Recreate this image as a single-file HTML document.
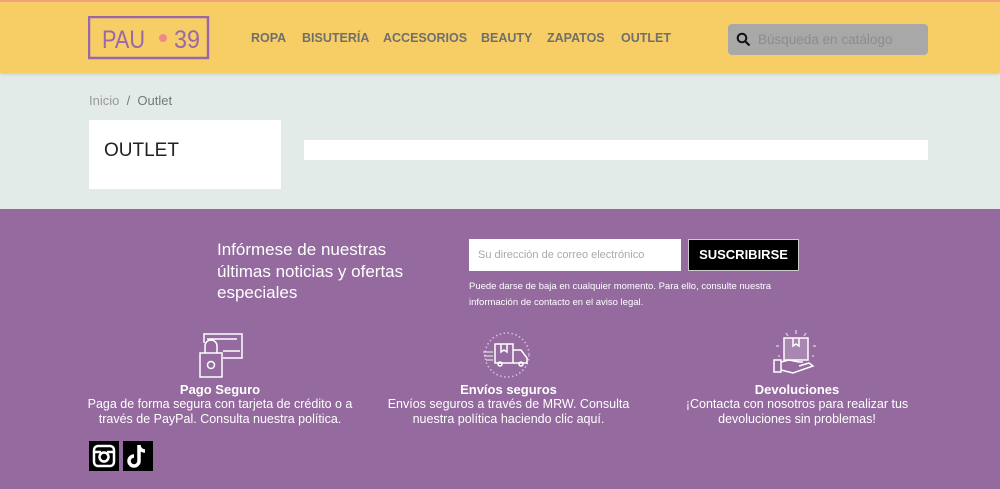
<!DOCTYPE html>
<html><head><meta charset="utf-8"><style>
*{margin:0;padding:0;box-sizing:border-box}
body{width:1000px;height:489px;overflow:hidden;font-family:"Liberation Sans",sans-serif;background:#e3ebe8;position:relative}
.hdr{position:absolute;left:0;top:0;width:1000px;height:73px;background:#f7cd66;border-top:2px solid #f0a27a;box-shadow:0 1px 3px rgba(0,0,0,.15)}
.nav{position:absolute;top:29px;font-size:12.5px;font-weight:bold;color:#6f6f6f;letter-spacing:0}
.search{position:absolute;left:728px;top:22px;width:200px;height:31px;background:#a8a8a8;border-radius:4px}
.search span{position:absolute;left:30px;top:8px;font-size:13.5px;color:#8c8c8c}
.bc{position:absolute;left:89px;top:93px;font-size:13px;color:#777}
.box{position:absolute;left:89px;top:120px;width:192px;height:69px;background:#fff}
.box h1{position:absolute;left:15px;top:20px;font-size:19px;font-weight:normal;color:#222}
.bar{position:absolute;left:304px;top:140px;width:624px;height:20px;background:#fff}
.ft{position:absolute;left:0;top:209px;width:1000px;height:280px;background:#946a9f;color:#fff}
.ft .t{position:absolute;left:217px;top:30px;font-size:17px;line-height:21.5px;width:200px}
.inp{position:absolute;left:469px;top:30px;width:212px;height:32px;background:#fff;font-size:11px;color:#aaa;padding:10px 9px}
.btn{position:absolute;left:688px;top:30px;width:111px;height:32px;background:#000;border:1px solid #ccc;font-size:13px;font-weight:bold;text-align:center;line-height:30px}
.sm{position:absolute;left:469px;top:70px;font-size:9.5px;line-height:15.5px;width:340px}
.col{position:absolute;top:173px;text-align:center;font-size:12.5px;line-height:15px}
.col b{display:block;font-size:13px}
.soc{position:absolute;top:232px;width:30px;height:30px;background:#000}
</style></head><body>
<div class="hdr">
<svg style="position:absolute;left:88px;top:14px" width="122" height="45" viewBox="0 0 122 45"><rect x="1" y="1" width="119" height="41" fill="none" stroke="#9a68a8" stroke-width="2.5"/><text x="14" y="32" font-family="Liberation Sans" font-size="25" fill="#9a68a8" textLength="43" lengthAdjust="spacingAndGlyphs">PAU</text><circle cx="75" cy="22" r="4" fill="#ee8a88"/><text x="86" y="32" font-family="Liberation Sans" font-size="25" fill="#9a68a8" textLength="26" lengthAdjust="spacingAndGlyphs">39</text></svg>
<div class="nav" style="left:251px">ROPA</div>
<div class="nav" style="left:302px">BISUTERÍA</div>
<div class="nav" style="left:383px">ACCESORIOS</div>
<div class="nav" style="left:481px">BEAUTY</div>
<div class="nav" style="left:547px">ZAPATOS</div>
<div class="nav" style="left:621px">OUTLET</div>
<div class="search"><svg style="position:absolute;left:8px;top:8px" width="15" height="15" viewBox="0 0 15 15"><circle cx="6" cy="6" r="4.3" fill="none" stroke="#111" stroke-width="2"/><path d="M9 9l4.5 4.5" stroke="#111" stroke-width="2.2"/></svg><span>Búsqueda en catálogo</span></div>
</div>
<div class="bc"><span style="color:#999">Inicio</span> &nbsp;/&nbsp; Outlet</div>
<div class="box"><h1>OUTLET</h1></div>
<div class="bar"></div>
<div class="ft">
<div class="t">Infórmese de nuestras últimas noticias y ofertas especiales</div>
<div class="inp">Su dirección de correo electrónico</div>
<div class="btn">SUSCRIBIRSE</div>
<div class="sm">Puede darse de baja en cualquier momento. Para ello, consulte nuestra información de contacto en el aviso legal.</div>
<svg style="position:absolute;left:195px;top:122px" width="50" height="50" viewBox="0 0 50 50" fill="none" stroke="#fff" stroke-width="1.5"><path d="M22 3h25v24H28M9 12V3h13"/><path d="M12 8h30M28 20h17"/><path d="M10 22v-7a6 6 0 0 1 12 0v7"/><rect x="5" y="22" width="22" height="24" fill="#946a9f"/><circle cx="16" cy="34" r="3.5"/></svg>
<svg style="position:absolute;left:481px;top:120px" width="56" height="52" viewBox="0 0 56 52" fill="none" stroke="#fff" stroke-width="1.5"><circle cx="26" cy="26" r="22" stroke-dasharray="1.5 2.5" stroke-opacity=".6"/><path d="M2 23h10M3 27h9M5 31h7" stroke-opacity=".6"/><rect x="14" y="15" width="18" height="19"/><path d="M20 15v8l3-2 3 2v-8"/><path d="M32 21h8l6 8v5H32"/><circle cx="19" cy="35" r="2"/><circle cx="40" cy="35" r="2"/></svg>
<svg style="position:absolute;left:766px;top:120px" width="60" height="52" viewBox="0 0 60 52" fill="none" stroke="#fff" stroke-width="1.5"><rect x="18" y="9" width="24" height="22" fill="rgba(255,255,255,.2)"/><path d="M27 9v8l3-2 3 2V9"/><path d="M8 31h7v12H8zM15 33l8-2 10 2h4M15 41l12 3 20-7-4-3-10 3" /><path d="M30 1v4M20 4l2 3M40 4l-2 3M10 17h3M47 17h3M12 27h2M46 27h2" stroke-opacity=".6"/></svg>
<div class="col" style="left:80px;width:280px"><b>Pago Seguro</b>Paga de forma segura con tarjeta de crédito o a través de PayPal. Consulta nuestra política.</div>
<div class="col" style="left:380px;width:257px"><b>Envíos seguros</b>Envíos seguros a través de MRW. Consulta nuestra política haciendo clic aquí.</div>
<div class="col" style="left:677px;width:240px"><b>Devoluciones</b>¡Contacta con nosotros para realizar tus devoluciones sin problemas!</div>
<div class="soc" style="left:89px"><svg width="30" height="30" viewBox="0 0 30 30" fill="none" stroke="#fff" stroke-width="2.5"><rect x="5" y="5" width="20" height="20" rx="4"/><circle cx="15" cy="16" r="4.5"/><path d="M5 11h7M18 11h7"/></svg></div>
<div class="soc" style="left:123px"><svg width="30" height="30" viewBox="0 0 30 30" fill="none" stroke="#fff" stroke-width="3.5"><path d="M16 4v16a5 5 0 1 1-5-5"/><path d="M16 5a6 6 0 0 0 6 5"/></svg></div>
</div>
</body></html>
